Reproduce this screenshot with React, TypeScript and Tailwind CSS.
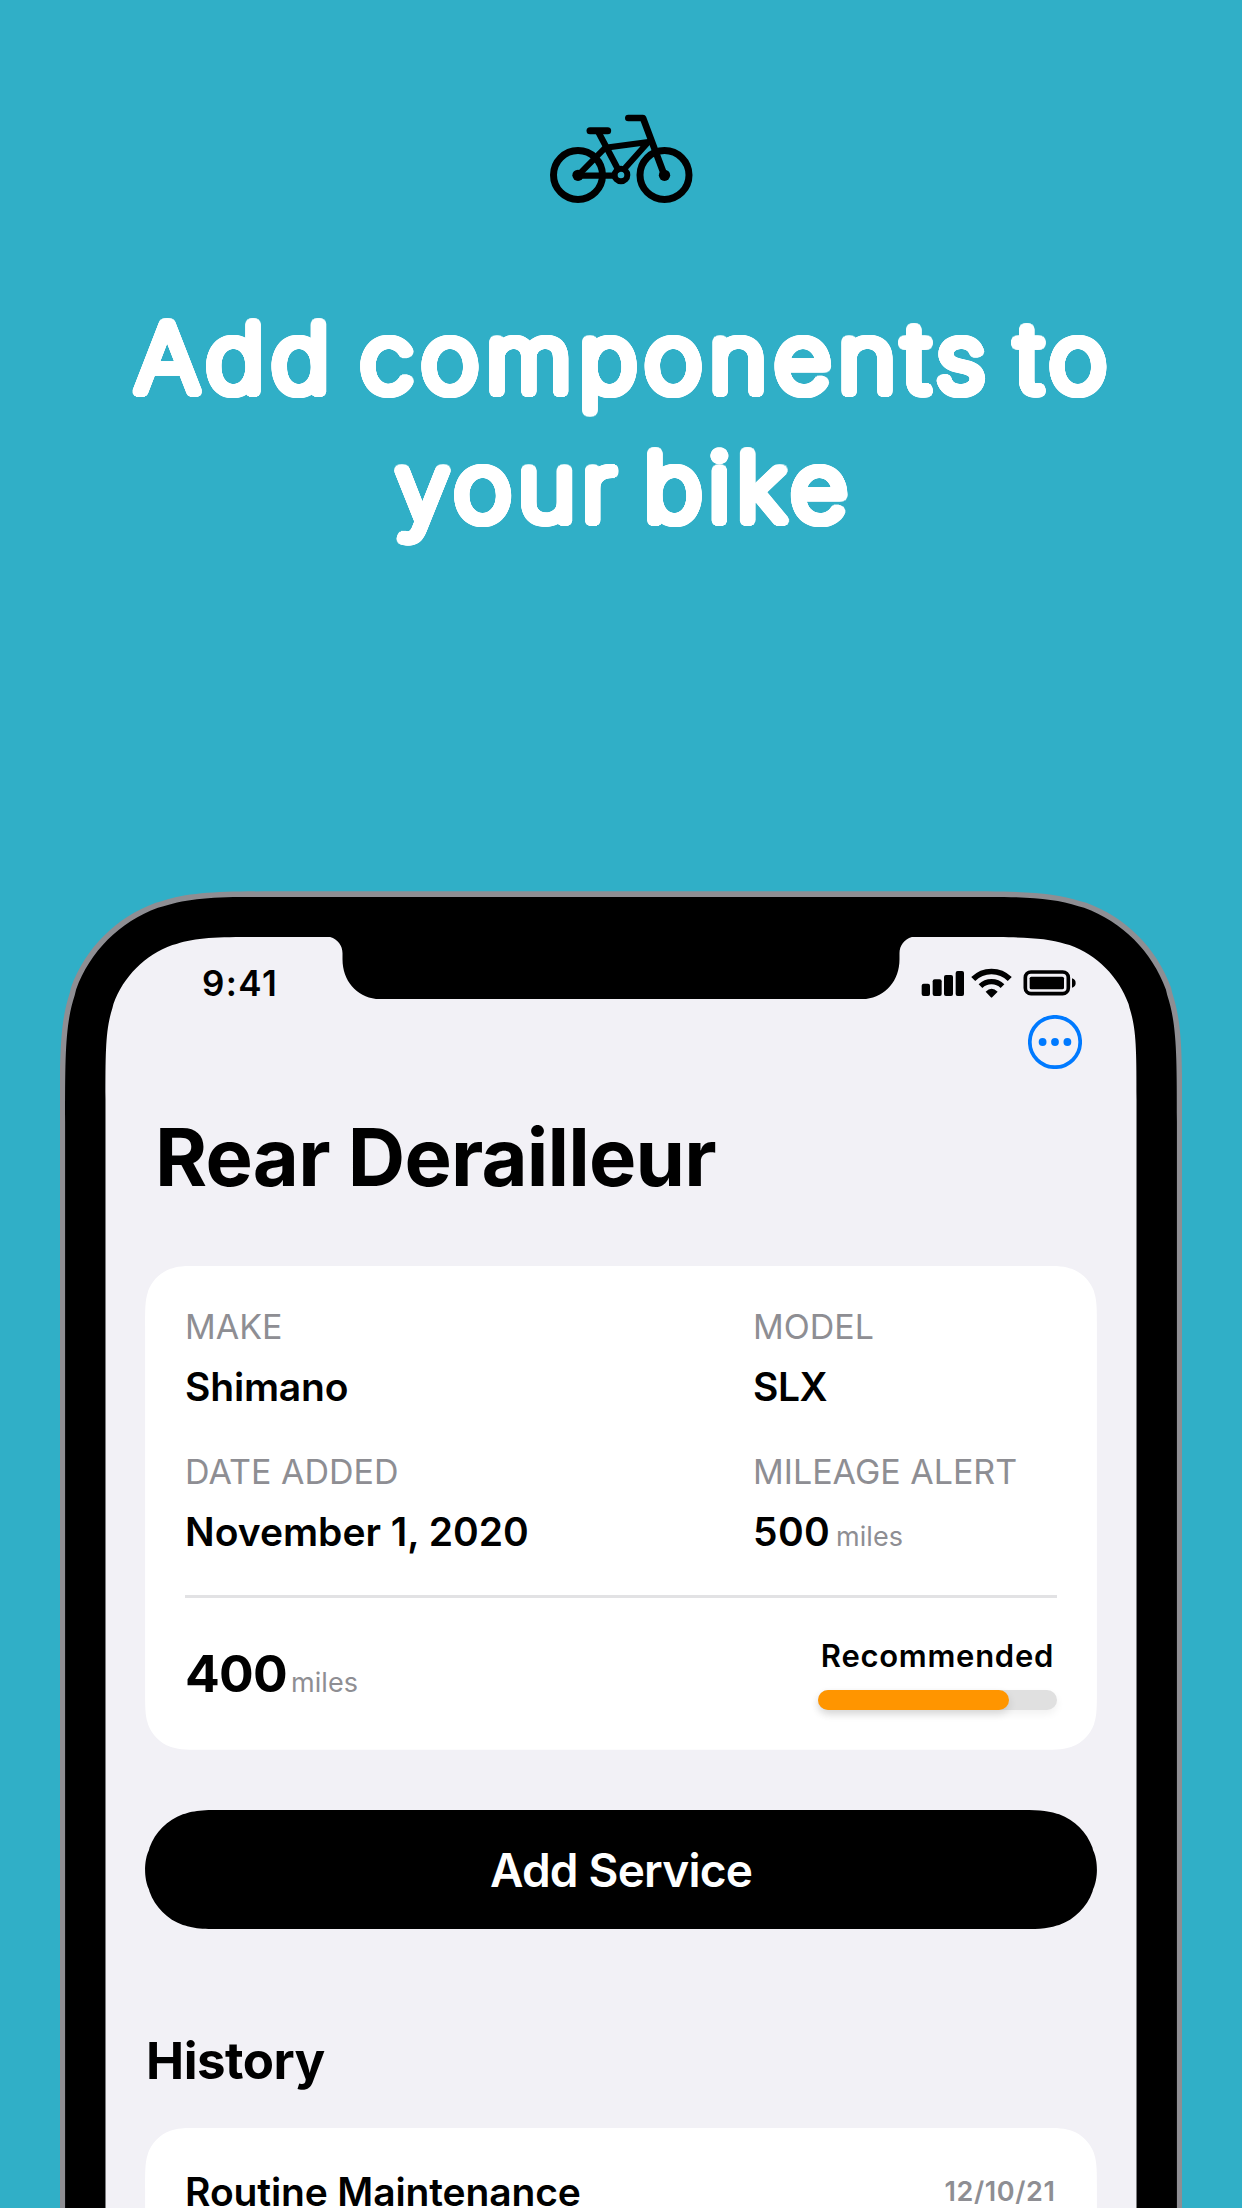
import { useLayoutEffect, useRef, useState } from "react";
import type { ReactNode } from "react";

/** Rounded rectangle whose corners ease into the straight edges (continuous corners). */
function squircle(w: number, h: number, r: number): string {
  const k = [1.52866, 1.08849, 0.86841, 0.66993, 0.0655, 0.63149, 0.07491, 0.37282, 0.16906].map((v) => v * r);
  const [a, b, c, d, e, f, g, i, j] = k;
  const a2 = Math.min(a, h / 2);
  const b2 = Math.min(b, h / 2 - r * 0.03);
  const c2 = Math.min(c, h / 2 - r * 0.2);
  return [
    `M${a} 0H${w - a}`,
    `C${w - b} 0 ${w - c} 0 ${w - d} ${e}L${w - f} ${g}`,
    `C${w - i} ${j} ${w - j} ${i} ${w - g} ${f}L${w - e} ${d}`,
    `C${w} ${c2} ${w} ${b2} ${w} ${a2}V${h - a2}`,
    `C${w} ${h - b2} ${w} ${h - c2} ${w - e} ${h - d}L${w - g} ${h - f}`,
    `C${w - j} ${h - i} ${w - i} ${h - j} ${w - f} ${h - g}L${w - d} ${h - e}`,
    `C${w - c} ${h} ${w - b} ${h} ${w - a} ${h}H${a}`,
    `C${b} ${h} ${c} ${h} ${d} ${h - e}L${f} ${h - g}`,
    `C${i} ${h - j} ${j} ${h - i} ${g} ${h - f}L${e} ${h - d}`,
    `C0 ${h - c2} 0 ${h - b2} 0 ${h - a2}V${a2}`,
    `C0 ${b2} 0 ${c2} ${e} ${d}L${g} ${f}`,
    `C${j} ${i} ${i} ${j} ${f} ${g}L${d} ${e}`,
    `C${c} 0 ${b} 0 ${a} 0Z`,
  ].join("");
}

/** Box clipped to continuous corners, measured from its own layout size. */
function Squircle({ radius, className, children }: { radius: number; className: string; children?: ReactNode }) {
  const ref = useRef<HTMLDivElement>(null);
  const [path, setPath] = useState("");
  useLayoutEffect(() => {
    const el = ref.current;
    if (!el) return;
    const { width, height } = el.getBoundingClientRect();
    setPath(squircle(width, height, radius));
  }, [radius]);
  return (
    <div ref={ref} className={className} style={path ? { clipPath: `path("${path}")` } : undefined}>
      {children}
    </div>
  );
}

/** Rings of hard shadows that thicken thin letters and give them round ends. */
const roundEnds = [2.6, 5.2]
  .flatMap((r) =>
    Array.from({ length: 32 }, (_, n) => {
      const t = (n / 32) * Math.PI * 2;
      return `${(r * Math.cos(t)).toFixed(2)}px ${(r * Math.sin(t)).toFixed(2)}px 0 #fff`;
    }),
  )
  .join(",");

function BikeIcon() {
  return (
    <svg viewBox="3 0 540 360" className="h-[120px] w-[180px]" fill="none" stroke="#000" strokeLinecap="round" strokeLinejoin="round">
      <circle cx="144" cy="225" r="73.5" strokeWidth="21" />
      <circle cx="403.5" cy="225" r="73.5" strokeWidth="21" />
      <circle cx="144" cy="226" r="17" fill="#000" stroke="none" />
      <circle cx="403.5" cy="226" r="17" fill="#000" stroke="none" />
      <circle cx="273" cy="225" r="19" strokeWidth="18" />
      <path d="M144 227H250" strokeWidth="19" strokeLinecap="butt" />
      <path d="M144 226L226 143L355 126L282 208" strokeWidth="18" />
      <path d="M205 96L264 208" strokeWidth="19" />
      <path d="M180 92H233" strokeWidth="21" />
      <path d="M295 54H339L403 225" strokeWidth="20" />
    </svg>
  );
}

function StatusIcons() {
  return (
    <svg viewBox="45 15 510 150" className="h-[50px] w-[170px]" fill="#000">
      <rect x="65" y="101" width="25" height="37" rx="6" />
      <rect x="98" y="88" width="27" height="50" rx="6" />
      <rect x="132" y="75" width="27" height="63" rx="6" />
      <rect x="167" y="63" width="25" height="75" rx="6" />
      <path d="M219.700 87.200A77.500 77.500 0 0 1 329.300 87.200" fill="none" stroke="#000" strokeWidth="17" />
      <path d="M241.500 108.500A47 47 0 0 1 307.500 108.500" fill="none" stroke="#000" strokeWidth="16" />
      <path d="M257 125Q274.500 108 293 125L276.500 142Q274.500 144 272.500 142Z" />
      <rect x="376" y="66" width="129" height="65" rx="17" fill="none" stroke="#000" strokeWidth="11" />
      <rect x="389" y="80" width="103" height="38" rx="5" />
      <path d="M516 85Q527 88 527 99Q527 110 516 113Z" />
    </svg>
  );
}

function Notch() {
  return (
    <svg viewBox="0 0 592 62.300" className="absolute -top-px left-[219.300px] h-[63.300px] w-[592px]" preserveAspectRatio="none" fill="#000">
      <path d="M0 0H592C581 1 574.500 8 574.500 17V23C574.500 46 558 62.300 536 62.300H56C34 62.300 17.500 46 17.500 23V17C17.500 8 11 1 0 0Z" />
    </svg>
  );
}

function Field({ label, value, unit, className = "" }: { label: string; value: string; unit?: string; className?: string }) {
  return (
    <div>
      <div className="text-[34px] leading-[44px] text-[#8e8e93]">{label}</div>
      <div className={`mt-[11.700px] flex h-[52px] items-baseline gap-[6px] text-[39px] leading-[52px] font-semibold ${className}`}>
        <span>{value}</span>
        {unit && <span className="text-[27px] leading-none font-normal tracking-[0.1px] text-[#8e8e93]">{unit}</span>}
      </div>
    </div>
  );
}

export default function App() {
  return (
    <main className="relative h-[2208px] w-[1242px] overflow-hidden bg-[#30afc7] font-['Inter',sans-serif] text-black">
      <header className="flex h-[891.300px] flex-col items-center pt-[100px]">
        <BikeIcon />
        <h1
          className="mt-[73.600px] scale-x-105 pl-[7px] text-center text-[94px] leading-[129px] font-extralight tracking-[6.750px] whitespace-nowrap text-white [text-rendering:geometricPrecision] [word-spacing:-11px]"
          style={{ textShadow: roundEnds }}
        >
          Add components to
          <br />
          <span className="tracking-[5.800px]">your bike</span>
        </h1>
      </header>

      <Squircle radius={152} className="mx-auto h-[1800px] w-[1122.600px] bg-[#8e8e93] p-[5.400px]">
        <Squircle radius={147} className="h-full bg-black p-[40.400px]">
          <Squircle radius={106} className="relative h-full bg-[#f2f1f6]">
            <Notch />
            <div className="flex h-[78px] items-start justify-between pr-[51.600px] pl-[96.500px]">
              <span className="mt-[25.500px] text-[35px] leading-[40px] font-semibold tracking-[1.400px]">9:41</span>
              <div className="mt-[17.900px]">
                <StatusIcons />
              </div>
            </div>
            <div className="flex justify-end pr-[54.600px]">
              <svg viewBox="0 0 54 54" className="size-[54px]" fill="#007aff">
                <circle cx="27" cy="27" r="25.200" fill="none" stroke="#007aff" strokeWidth="3.700" />
                <circle cx="14.600" cy="27" r="3.900" />
                <circle cx="27" cy="27" r="3.900" />
                <circle cx="39.400" cy="27" r="3.900" />
              </svg>
            </div>

            <div className="px-[39.600px]">
              <h2 className="mt-[43.100px] pl-[10px] text-[79.500px] leading-[90px] font-bold tracking-[-0.800px] whitespace-nowrap">Rear Derailleur</h2>

              <Squircle radius={40} className="mt-[63.700px] h-[484px] bg-white px-[40px] pt-[39.600px]">
                <div className="grid grid-cols-[568px_1fr] gap-y-[37.300px] whitespace-nowrap">
                  <Field label="MAKE" value="Shimano" className="tracking-[-0.200px]" />
                  <Field label="MODEL" value="SLX" className="tracking-[-0.500px]" />
                  <Field label="DATE ADDED" value="November 1, 2020" />
                  <Field label="MILEAGE ALERT" value="500" unit="miles" className="tracking-[0.300px]" />
                </div>
                <div className="mt-[37px] h-[2.500px] bg-[#e2e2e4]" />
                <div className="flex items-start justify-between pt-[39.900px]">
                  <div className="mt-[5px] flex h-[60px] items-baseline gap-[4px] text-[51.500px] leading-[60px] font-bold tracking-[-0.800px]">
                    <span>400</span>
                    <span className="text-[27px] leading-none font-normal tracking-[0.100px] text-[#8e8e93]">miles</span>
                  </div>
                  <div className="w-[239px]">
                    <div className="text-center text-[31px] leading-[36px] font-semibold tracking-[0.720px]">Recommended</div>
                    <div className="mt-[16.300px] h-[20.400px] rounded-[10px] bg-[#e0e0e0] shadow-[0_4px_8px_rgba(0,0,0,0.060)]">
                      <div className="h-full w-4/5 rounded-[10px] bg-[#ff9500] shadow-[0_4px_8px_rgba(0,0,0,0.120)]" />
                    </div>
                  </div>
                </div>
              </Squircle>

              <Squircle radius={59.8} className="mt-[60px] flex h-[119.600px] items-center justify-center bg-black">
                <span className="text-[46px] leading-[60px] font-semibold tracking-[-0.800px] text-white">Add Service</span>
              </Squircle>

              <h3 className="mt-[101.500px] pl-px text-[51px] leading-[60px] font-bold tracking-[-0.500px]">History</h3>

              <Squircle radius={40} className="mt-[36.800px] flex h-[400px] items-start justify-between bg-white pr-[41.500px] pl-[40px] pt-[37.800px] whitespace-nowrap">
                <span className="text-[39px] leading-[52px] font-semibold tracking-[-0.130px]">Routine Maintenance</span>
                <span className="mt-[8.500px] text-[27px] leading-[36px] font-semibold tracking-[0.600px] text-[#8e8e93]">12/10/21</span>
              </Squircle>
            </div>
          </Squircle>
        </Squircle>
      </Squircle>
    </main>
  );
}
